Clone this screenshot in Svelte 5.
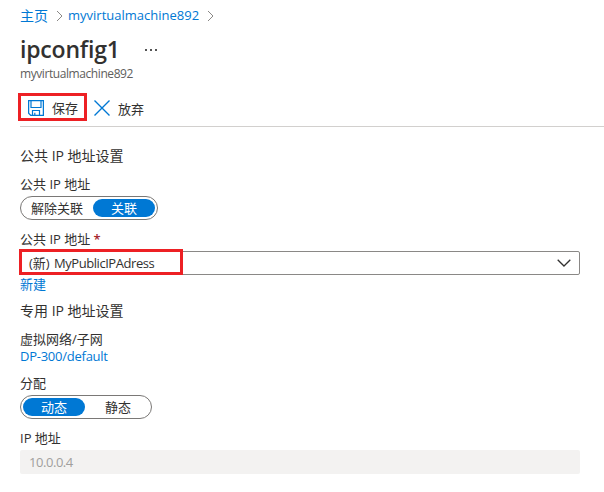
<script>
  let associated = $state(true);
  let dynamic = $state(true);
</script>

<main>
  <nav class="crumbs">
    <a class="home" href="#home">主页</a>
    <svg class="sep" width="7" height="12" viewBox="0 0 7 12"><path d="M1 1l5 5-5 5" /></svg>
    <a class="vm" href="#vm">myvirtualmachine892</a>
    <svg class="sep last" width="7" height="12" viewBox="0 0 7 12"><path d="M1 1l5 5-5 5" /></svg>
  </nav>
  <header>
    <h1>ipconfig1</h1>
    <span class="dots"><i></i><i></i><i></i></span>
  </header>
  <div class="sub"><span>myvirtualmachine892</span></div>

  <div class="toolbar">
    <button class="save">
      <svg width="16" height="16" viewBox="0 0 16 16" fill="none" stroke="#0078d4">
        <path d="M.6.6h14.8v14.8H2.8L.6 13.2z" stroke-width="1.3" />
        <path d="M3 .8v6.7h10V.8M4.5 15v-4.5h7V15M6.8 15v-2.2" stroke-width="1.2" />
      </svg>
      <span>保存</span>
    </button>
    <button class="discard">
      <svg width="16" height="16" viewBox="0 0 16 16" fill="none" stroke="#0078d4" stroke-width="1.4"><path d="M.5.5l15 15M15.5.5l-15 15" /></svg>
      <span>放弃</span>
    </button>
  </div>

  <div class="form">
    <h2 class="first">公共 IP 地址设置</h2>
    <div class="label l1">公共 IP 地址</div>
    <div class="toggle assoc">
      <button class:on={!associated} onclick={() => (associated = false)}>解除关联</button>
      <button class:on={associated} onclick={() => (associated = true)}>关联</button>
    </div>
    <div class="label l2">公共 IP 地址 <b>*</b></div>
    <div class="select">
      <span class="value">(新) <span class="name">MyPublicIPAdress</span></span>
      <svg width="14" height="8" viewBox="0 0 14 8" fill="none" stroke="#323130" stroke-width="1.3"><path d="M.7.7L7 7 13.3.7" /></svg>
      <span class="mark"></span>
    </div>
    <a class="new" href="#new">新建</a>
    <h2 class="second">专用 IP 地址设置</h2>
    <div class="label l3">虚拟网络/子网</div>
    <a class="subnet" href="#subnet"><span>DP-300/default</span></a>
    <div class="label l4">分配</div>
    <div class="toggle alloc">
      <button class:on={dynamic} onclick={() => (dynamic = true)}>动态</button>
      <button class:on={!dynamic} onclick={() => (dynamic = false)}>静态</button>
    </div>
    <div class="label l5">IP 地址</div>
    <div class="disabled">10.0.0.4</div>
  </div>
</main>

<style>
  :global(body) { background: #fff; }
  main {
    box-sizing: border-box;
    width: 604px;
    height: 492px;
    padding-left: 20px;
    overflow: hidden;
    color: #323130;
    font: 13px/18px "Open Sans", "Noto Sans CJK SC", sans-serif;
    white-space: nowrap;
  }
  a { color: #0078d4; text-decoration: none; }
  button {
    padding: 0;
    border: 0;
    background: none;
    color: inherit;
    font: inherit;
  }
  svg { flex: none; }
  .crumbs { display: flex; align-items: center; height: 31px; }
  .home { width: 36px; padding-top: 1px; font-size: 14px; }
  .vm { width: 139px; padding-bottom: 1px; font-size: 13px; letter-spacing: 0; }
  .sep { width: 7px; margin-right: 5px; fill: none; stroke: #8a8886; }
  .sep.last { margin: 0; }
  header { display: flex; align-items: center; height: 36px; }
  h1 { width: 125px; margin: 0; padding-top: 1px; font-size: 23px; line-height: 35px; font-weight: 600; letter-spacing: -0.2px; }
  .dots { display: flex; gap: 3px; padding-top: 2px; }
  .dots i { width: 2px; height: 2px; background: #555; }
  .sub { height: 14px; line-height: 14px; font-size: 12px; color: #605e5c; letter-spacing: -0.42px; }
  .toolbar {
    display: flex;
    align-items: flex-start;
    box-sizing: border-box;
    height: 46px;
    padding-top: 12px;
    border-bottom: 1px solid #d2d0ce;
  }
  .toolbar button { display: flex; align-items: center; }
  .save {
    box-sizing: border-box;
    width: 69px;
    height: 28px;
    margin-left: -2px;
    padding: 2px 0 0 7px;
    border: 3px solid #ed2024;
  }
  .save span { margin-left: 8px; }
  .discard { height: 30px; margin-left: 7px; }
  .discard span { margin-left: 8px; padding-top: 2px; }
  .form { display: flex; flex-direction: column; width: 560px; }
  h2 { margin: 0; height: 20px; font-size: 14px; line-height: 20px; font-weight: 400; }
  .first { margin-top: 19px; }
  .label { height: 18px; }
  .l1 { margin: 9px 0 3px; }
  .l2 { margin: 10px 0 3px; }
  .label b { color: #a4262c; font-weight: 600; }
  .toggle {
    display: flex;
    box-sizing: border-box;
    height: 24px;
    padding: 2px;
    border: 1px solid #7a7876;
    border-radius: 12px;
  }
  .toggle button { height: 18px; border-radius: 9px; line-height: 18px; }
  .toggle .on { background: #0078d4; color: #fff; }
  .assoc { width: 138px; }
  .assoc button:first-child { width: 70px; padding-right: 2px; }
  .assoc button:last-child { width: 62px; }
  .alloc { width: 132px; }
  .alloc button:first-child { width: 62px; }
  .alloc button:last-child { width: 64px; padding-left: 2px; }
  .select {
    position: relative;
    display: flex;
    align-items: center;
    justify-content: space-between;
    box-sizing: border-box;
    height: 24px;
    padding: 0 8px;
    border: 1px solid #8a8886;
    border-radius: 2px;
  }
  .mark {
    position: absolute;
    left: -2px;
    top: -3px;
    box-sizing: border-box;
    width: 164px;
    height: 26px;
    border: 3px solid #ed2024;
  }
  .name { margin-left: 1px; letter-spacing: -0.45px; }
  .new { height: 18px; }
  .second { margin-top: 8px; }
  .l3 { margin-top: 9px; }
  .subnet { height: 17px; line-height: 17px; letter-spacing: -0.25px; }
  .l4 { margin: 9px 0 3px; }
  .l5 { margin: 10px 0 3px; }
  .disabled {
    height: 24px;
    padding-left: 9px;
    border-radius: 2px;
    background: #f3f2f1;
    color: #a19f9d;
    line-height: 25px;
    letter-spacing: -0.45px;
  }
</style>
